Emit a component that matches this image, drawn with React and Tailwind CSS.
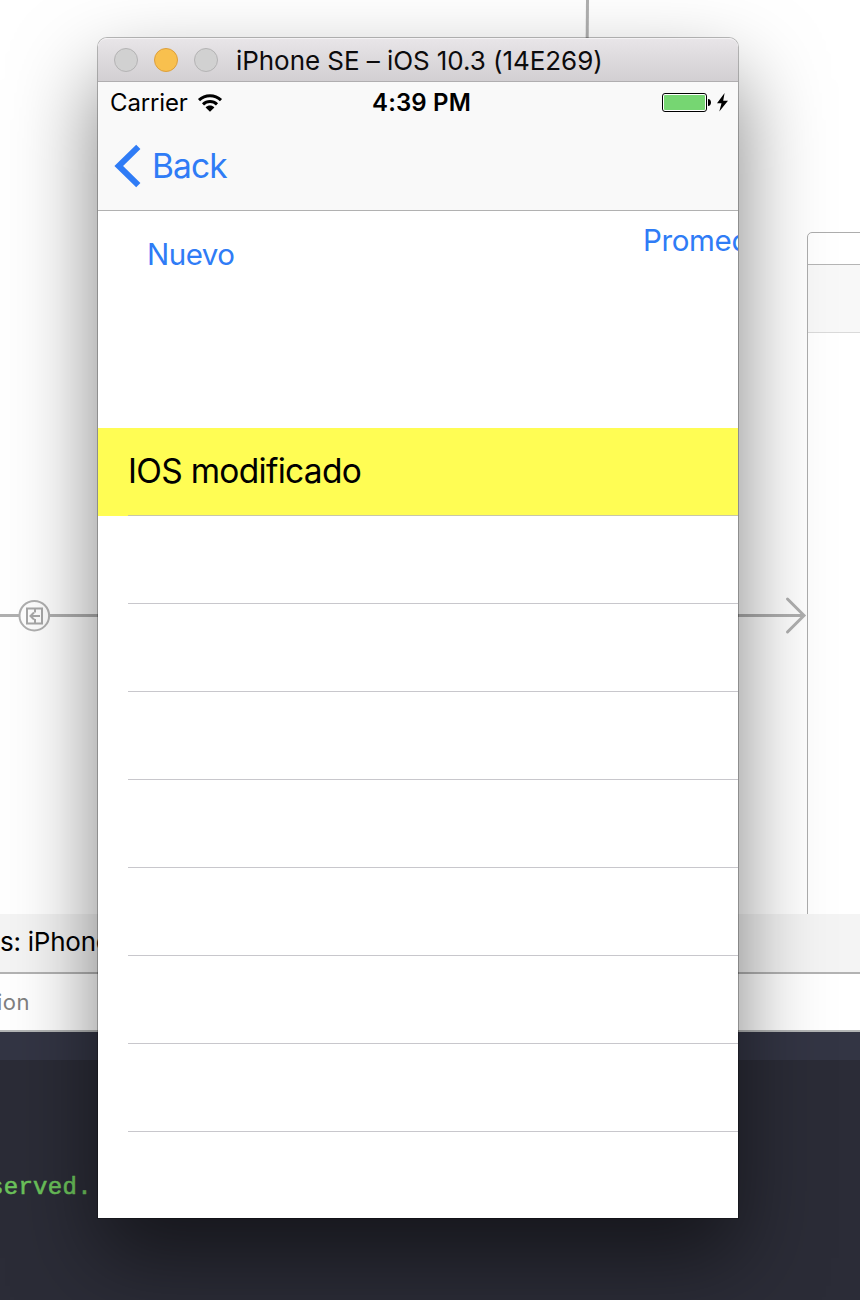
import React from "react";

function Backdrop() {
  return (
    <div className="flex h-[1300px] flex-col overflow-hidden">
      <div className="relative h-[914px] shrink-0 bg-white">
        <svg className="absolute inset-0" width="860" height="914" fill="none">
          <path d="M587.5 0L587 60" stroke="#b0b0b0" strokeWidth="3" />
          <path d="M0 615.5H19M50 615.5H803" stroke="#b0b0b0" strokeWidth="3" />
          <path d="M787.5 599L804 615.5L787.5 632" stroke="#b0b0b0" strokeWidth="3" strokeLinecap="round" />
          <circle cx="34.3" cy="615.7" r="14.8" stroke="#b0b0b0" strokeWidth="2" fill="#fff" />
          <path d="M27 608.5H42V623.5H27ZM35 608V612.5M35 619V624M40 616H31M34 612.5L30.5 616L34 619.5" stroke="#a8a8a8" strokeWidth="2" />
        </svg>
        <div className="absolute top-[232px] left-[807px] flex h-[700px] w-[400px] flex-col rounded-t-[5px] border border-[#adadad] bg-white [clip-path:inset(0_0_18px_0)]">
          <div className="h-[31px]" />
          <div className="h-[69px] border-t border-b border-t-[#b5b5b5] border-b-[#dadada] bg-[#f8f8f8]" />
        </div>
      </div>
      <div className="flex h-[60px] shrink-0 items-center border-b-2 border-[#b3b3b3] bg-[#f4f4f4]">
        <span className="-mt-[2px] text-[26px] leading-none tracking-[-0.25px] whitespace-nowrap text-black">s: iPhone SE</span>
      </div>
      <div className="flex h-[58px] shrink-0 items-center border-b-2 border-[#b3b5b5] bg-white">
        <span className="-ml-[3px] text-[22px] leading-none tracking-[0.5px] whitespace-nowrap text-[#808080]">ion</span>
      </div>
      <div className="h-[28px] shrink-0 bg-[#333544]" />
      <div className="flex-1 bg-[#2b2c37] pt-[114px] font-['Liberation_Mono',monospace] text-[#6cc35b]">
        <div className="-ml-[11px] text-[24px] leading-[28px] tracking-[0.3px] whitespace-pre [-webkit-text-stroke:0.6px_#6cc35b]">served.</div>
      </div>
    </div>
  );
}

function TitleBar() {
  return (
    <div className="flex h-[44px] shrink-0 items-center rounded-t-[9px] border-t border-b border-t-[#f4f2f4] border-b-[#b0aeb0] bg-linear-to-b from-[#e8e5e8] to-[#d2cfd2] pl-4">
      <div className="flex gap-4">
        <i className="size-6 rounded-full border border-[#b4b3b4] bg-[#d1d1d1]" />
        <i className="size-6 rounded-full border border-[#dd9f3c] bg-[#f8c04e]" />
        <i className="size-6 rounded-full border border-[#b4b3b4] bg-[#d1d1d1]" />
      </div>
      <span className="ml-[18px] pt-[2px] text-[26px] leading-none tracking-[-0.06px] whitespace-nowrap text-[#0c0b0c]">
        iPhone SE – iOS 10.3 (14E269)
      </span>
    </div>
  );
}

function StatusBar() {
  return (
    <div className="grid h-[40px] grid-cols-3 items-center pt-[2px] pr-[10px] pl-[12px] text-black">
      <div className="flex items-center">
        <span className="w-[78px] text-[24px] leading-none tracking-[-0.15px] whitespace-nowrap">Carrier</span>
        <svg className="ml-[9px]" width="26" height="20" viewBox="0 0 26 20">
          <g fill="none" stroke="#000" strokeWidth="3">
            <path d="M2 7.2C8.2 1.2 17.8 1.2 24 7.2" />
            <path d="M6 11.3C10 7.5 16 7.5 20 11.3" />
          </g>
          <path d="M8.6 14.4C11.1 12 14.9 12 17.4 14.4L13 18.8Z" />
        </svg>
      </div>
      <span className="pl-[5px] text-center text-[24px] leading-none font-semibold tracking-[0.15px] whitespace-nowrap">4:39 PM</span>
      <svg className="justify-self-end" width="67" height="22" viewBox="661 92 67 22">
        <rect x="662.5" y="93.5" width="44" height="18" rx="2.5" fill="#fff" stroke="#000" />
        <rect x="664" y="95" width="41" height="15" rx="1" fill="#76d672" />
        <path d="M708 99C712 99 712 106 708 106Z" />
        <path d="M724.6 93L717 103.3H721.5L719.3 111.5L728 100.8H723.2Z" />
      </svg>
    </div>
  );
}

function NavBar() {
  return (
    <div className="flex h-[89px] items-center border-b border-[#b1b1b1] pb-[1px] pl-4 text-[#2f7cf6]">
      <svg width="27" height="44" viewBox="0 0 27 44" fill="none">
        <path d="M24.3 2.8L4.7 22L24.3 41.2" stroke="#2f7cf6" strokeWidth="6" />
      </svg>
      <span className="ml-[11px] pt-[3px] text-[33.5px] leading-none tracking-[-0.9px]">Back</span>
    </div>
  );
}

const emptyRows = [1, 2, 3, 4, 5, 6, 7];

function Simulator() {
  return (
    <div className="absolute top-[38px] left-[98px] flex h-[1180px] w-[640px] flex-col rounded-t-[9px] shadow-[0_0_0_1px_rgba(0,0,0,0.26),0_40px_84px_rgba(0,0,0,0.5)]">
      <TitleBar />
      <div className="flex flex-1 flex-col overflow-hidden bg-white">
        <div className="bg-[#f9f9f9]">
          <StatusBar />
          <NavBar />
        </div>
        <div className="flex h-[217px] items-start justify-between pl-[49px] text-[29.5px] leading-[36px] text-[#2f7cf6]">
          <span className="mt-[25px] tracking-[-0.5px]">Nuevo</span>
          <span className="mt-[11px] w-[95px] overflow-hidden tracking-[-0.35px] whitespace-nowrap">Promedio</span>
        </div>
        <div className="h-[88px] bg-[#fffd54] pl-[30px]">
          <div className="flex h-[88px] items-center border-b border-[#c8c7a8] text-[33.5px] leading-none tracking-[-0.7px] whitespace-nowrap text-black">
            IOS modificado
          </div>
        </div>
        {emptyRows.map((row) => (
          <div key={row} className="ml-[30px] h-[88px] shrink-0 border-b border-[#c8c7cc]" />
        ))}
      </div>
    </div>
  );
}

export default function App() {
  return (
    <main className="relative h-[1300px] w-[860px] overflow-hidden bg-white font-['Inter',sans-serif]">
      <Backdrop />
      <Simulator />
    </main>
  );
}
